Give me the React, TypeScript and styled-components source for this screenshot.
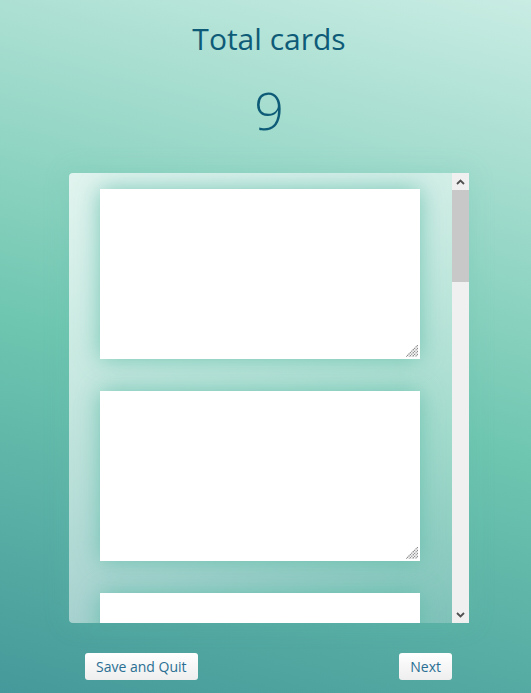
import React from "react";
import styled, { createGlobalStyle } from "styled-components";

const Global = createGlobalStyle`
  html, body { margin: 0; padding: 0; }
  body { font-family: "Open Sans", "Lato", sans-serif; }
`;

const grip =
  "data:image/svg+xml;utf8," +
  encodeURIComponent(
    '<svg xmlns="http://www.w3.org/2000/svg" width="12" height="12" viewBox="0 0 12 12"><g stroke="#8a8a8a" stroke-width="1.2" stroke-dasharray="1.4 0.6"><path d="M12 0 L0 12"/><path d="M12 3 L3 12"/><path d="M12 6 L6 12"/><path d="M12 9 L9 12"/></g></svg>'
  );

const Page = styled.div`
  min-height: 693px;
  box-sizing: border-box;
  background: linear-gradient(15deg, #45999a 0%, #6ec6b0 45%, #c9ece3 100%);
  display: flex;
  flex-direction: column;
  align-items: center;
  padding: 20px 0 0 7px;
`;

const Title = styled.h1`
  margin: 0;
  font-family: "Open Sans", sans-serif;
  font-size: 30px;
  line-height: 38px;
  font-weight: 400;
  color: #0e5b78;
`;

const Count = styled.div`
  margin-top: 20px;
  font-family: "Open Sans", sans-serif;
  font-size: 52px;
  line-height: 64px;
  font-weight: 300;
  color: #0e5b78;
`;

const Panel = styled.div`
  margin-top: 31px;
  width: 400px;
  height: 450px;
  display: flex;
  border-radius: 4px 0 0 4px;
  overflow: hidden;
  background: linear-gradient(to bottom right, rgba(255,255,255,0.74) 0%, rgba(255,255,255,0.5) 50%, rgba(255,255,255,0.22) 100%);
  box-shadow: 0 0 24px rgba(100, 190, 170, 0.25);
`;

const ScrollArea = styled.div`
  flex: 1;
  height: 100%;
  box-sizing: border-box;
  overflow-y: auto;
  scrollbar-width: none;
  display: flex;
  flex-direction: column;
  align-items: flex-start;
  gap: 32px;
  padding: 16px 0 250px 31px;
  &::-webkit-scrollbar { display: none; }
`;

const Scrollbar = styled.div`
  width: 17px;
  flex: none;
  display: flex;
  flex-direction: column;
  background: #f0f0f0;
`;

const ArrowButton = styled.div`
  height: 17px;
  flex: none;
  display: flex;
  align-items: center;
  justify-content: center;
`;

const Track = styled.div`
  flex: 1;
`;

const Thumb = styled.div`
  height: 92px;
  background: #c8c8c8;
`;

const Card = styled.textarea`
  flex: none;
  width: 320px;
  height: 170px;
  box-sizing: border-box;
  border: none;
  outline: none;
  resize: none;
  background: #fff url("${grip}") no-repeat right 2px bottom 2px;
  box-shadow: 0 0 22px rgba(90, 185, 165, 0.75);
  font-family: "Open Sans", sans-serif;
  font-size: 15px;
  padding: 8px;
`;

const Footer = styled.div`
  margin-top: 30px;
  width: 400px;
  box-sizing: border-box;
  padding: 0 17px 0 16px;
  display: flex;
  justify-content: space-between;
`;

const Button = styled.button`
  height: 27px;
  padding: 0 11px;
  border: none;
  border-radius: 3px;
  background: linear-gradient(#ffffff, #eeeeee);
  color: #2a6f93;
  font-family: "Open Sans", sans-serif;
  font-size: 14px;
  cursor: pointer;
`;

const Chevron = ({ up }: { up?: boolean }) => (
  <svg width="9" height="6" viewBox="0 0 9 6">
    <path
      d={up ? "M1 5 L4.5 1.5 L8 5" : "M1 1 L4.5 4.5 L8 1"}
      fill="none"
      stroke="#505050"
      strokeWidth="1.8"
    />
  </svg>
);

export default function App() {
  return (
    <>
      <Global />
      <Page>
        <Title>Total cards</Title>
        <Count>9</Count>
        <Panel>
          <ScrollArea>
            {Array.from({ length: 9 }).map((_, i) => (
              <Card key={i} />
            ))}
          </ScrollArea>
          <Scrollbar>
            <ArrowButton>
              <Chevron up />
            </ArrowButton>
            <Track>
              <Thumb />
            </Track>
            <ArrowButton>
              <Chevron />
            </ArrowButton>
          </Scrollbar>
        </Panel>
        <Footer>
          <Button>Save and Quit</Button>
          <Button>Next</Button>
        </Footer>
      </Page>
    </>
  );
}
